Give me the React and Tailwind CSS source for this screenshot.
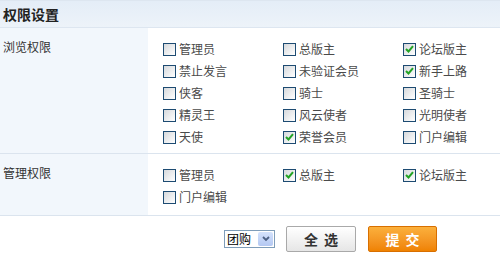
const font = { fontFamily: '"Noto Sans CJK SC", "Liberation Sans", sans-serif' }

const browse = [
  ["管理员", false], ["总版主", false], ["论坛版主", true],
  ["禁止发言", false], ["未验证会员", false], ["新手上路", true],
  ["侠客", false], ["骑士", false], ["圣骑士", false],
  ["精灵王", false], ["风云使者", false], ["光明使者", false],
  ["天使", false], ["荣誉会员", true], ["门户编辑", false],
]

const manage = [
  ["管理员", false], ["总版主", true], ["论坛版主", true],
  ["门户编辑", false],
]

function Box({ checked }) {
  return (
    <span className="w-[13px] h-[13px] border border-[#1d4b72] bg-gradient-to-br from-[#d6d9dc] to-[#ffffff] flex items-center justify-center shrink-0">
      {checked && (
        <svg width="9" height="8" viewBox="0 0 9 8">
          <path d="M1 4 L3.5 6.5 L8 1.2" fill="none" stroke="#22a324" strokeWidth="2" />
        </svg>
      )}
    </span>
  )
}

function Item({ label, checked }) {
  return (
    <div className="h-[22px] flex items-center gap-[3px]">
      <Box checked={checked} />
      <span className="text-[12px] leading-[14px] text-[#4a4a4a]">{label}</span>
    </div>
  )
}

function Section({ title, items, pb }) {
  return (
    <div className="grid grid-cols-[148px_1fr] border-b border-[#dbe4ee]">
      <div className="bg-[#f2f7fc] pl-[3px] pt-[11px] text-[12px] leading-[16px] text-[#333]">{title}</div>
      <div className={`grid grid-cols-[120px_120px_120px] pl-[15px] pt-[10px] ${pb}`}>
        {items.map(([label, checked], i) => (
          <Item key={i} label={label} checked={checked} />
        ))}
      </div>
    </div>
  )
}

export default function App() {
  return (
    <div className="w-[500px] h-[262px] bg-white overflow-hidden" style={font}>
      <div className="h-[28px] border-t border-[#dde6f0] border-b border-[#d3dfec] bg-gradient-to-b from-[#e4edf7] to-[#edf3f9] pl-[3px] flex items-center">
        <span className="text-[14px] font-bold text-[#222]">权限设置</span>
      </div>
      <Section title="浏览权限" items={browse} pb="pb-[5px]" />
      <Section title="管理权限" items={manage} pb="pb-[7px]" />
      <div className="flex items-center pl-[224px] pt-[10px]">
        <div className="w-[51px] h-[18px] border border-[#7f9db9] bg-white flex items-center justify-between pl-[2px] pr-[1px]">
          <span className="text-[12px] leading-[14px] text-black">团购</span>
          <span className="w-[15px] h-[14px] bg-gradient-to-b from-[#d4e2fc] to-[#b4c8f2] rounded-[2px] flex items-center justify-center">
            <svg width="8" height="6" viewBox="0 0 8 6">
              <path d="M1 1 L4 4 L7 1" fill="none" stroke="#4d6185" strokeWidth="1.8" />
            </svg>
          </span>
        </div>
        <button className="ml-[11px] w-[70px] h-[26px] border border-[#a9a9a9] rounded-[2px] bg-gradient-to-b from-[#ffffff] to-[#e6e6e6] text-[14px] font-bold text-[#333] tracking-[6px] pl-[6px]">
          全选
        </button>
        <button className="ml-[12px] w-[69px] h-[26px] border border-[#d86f00] rounded-[2px] bg-gradient-to-b from-[#fbb03b] to-[#ef8200] text-[14px] font-bold text-white tracking-[6px] pl-[6px]">
          提交
        </button>
      </div>
    </div>
  )
}
